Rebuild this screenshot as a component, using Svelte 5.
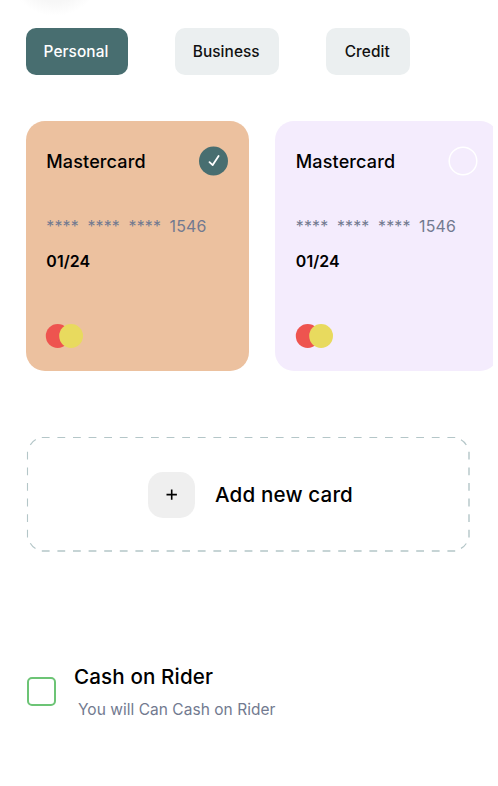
<script>
  const tabs = [
    { label: 'Personal', width: 102, active: true },
    { label: 'Business', width: 104.5, active: false },
    { label: 'Credit', width: 83.5, active: false }
  ];
  const cards = [
    { name: 'Mastercard', last: '1546', expiry: '01/24', selected: true },
    { name: 'Mastercard', last: '1546', expiry: '01/24', selected: false }
  ];
</script>

<main>
  <div class="shade"></div>
  <nav>
    {#each tabs as tab}
      <button class="tab" class:active={tab.active} style:width="{tab.width}px">{tab.label}</button>
    {/each}
  </nav>

  <section class="cards">
    {#each cards as card}
      <article class="card" class:selected={card.selected}>
        <header>
          <h2>{card.name}</h2>
          <svg width="30" height="30" viewBox="0 0 30 30" fill="none">
            {#if card.selected}
              <circle cx="14.5" cy="15" r="14.5" fill="#486e70" />
              <path d="M10.5 16.1 L13.7 19.1 L19.6 9.9" stroke="#fff" stroke-width="1.8" stroke-linecap="round" stroke-linejoin="round" />
            {:else}
              <circle cx="15" cy="15" r="13.8" stroke="#fff" stroke-width="1.5" />
            {/if}
          </svg>
        </header>
        <div class="number">
          <span class="mask">****</span><span class="mask">****</span><span class="mask">****</span><span>{card.last}</span>
        </div>
        <div class="expiry">{card.expiry}</div>
        <svg class="brand" width="38" height="24" viewBox="0 0 38 24">
          <circle cx="11.7" cy="12" r="11.9" fill="#ee544f" />
          <circle cx="25.1" cy="12" r="11.9" fill="#e8da5e" />
        </svg>
      </article>
    {/each}
  </section>

  <section class="add">
    <svg class="outline" width="444" height="116" viewBox="26 436 444 116" fill="none" stroke="#b4c6c8">
      <path d="M41.8 437.5H456" stroke-dasharray="7.8 7.8" stroke-width="1.1" />
      <path d="M41.8 551H456" stroke-dasharray="7.8 7.8" stroke-width="1.4" />
      <path d="M27.5 451.8V537.5" stroke-dasharray="7.8 7.8" stroke-width="1.1" />
      <path d="M469 451.8V537.5" stroke-dasharray="7.8 7.8" stroke-width="1.4" />
      <path d="M30.3 444.8Q32.5 441.5 35.8 439.6M461 439.8Q464.5 441.8 466.3 445M30.3 543.3Q32.2 546.6 35.5 548.6M461 548.4Q464.3 546.6 466.3 543.5" stroke-width="1.2" />
    </svg>
    <span class="plus">
      <svg width="12" height="12" viewBox="0 0 12 12" stroke="#000" stroke-width="1.6">
        <path d="M5.7 0.4v10.4M0.5 5.6h10.4" />
      </svg>
    </span>
    <span class="add-label">Add new card</span>
  </section>

  <section class="cash">
    <span class="box"></span>
    <div>
      <h3>Cash on Rider</h3>
      <p>You will Can Cash on Rider</p>
    </div>
  </section>
</main>

<style>
  :global(body) { margin: 0; background: #fff; }
  main {
    position: relative;
    box-sizing: border-box;
    width: 498px;
    height: 786px;
    padding-top: 28px;
    overflow: hidden;
    background: #fff;
    font-family: Inter, "Liberation Sans", sans-serif;
    color: #000;
  }
  h2, h3, p { margin: 0; font-weight: 500; }
  .shade {
    position: absolute;
    left: 7px;
    top: -80px;
    width: 96px;
    height: 96px;
    border-radius: 50%;
    background: radial-gradient(closest-side, #f7f7f7 70%, #fff);
  }
  nav { display: flex; gap: 47px; padding-left: 25.5px; height: 47px; }
  .tab {
    padding: 0 1px 0 0;
    border: 0;
    border-radius: 10px;
    background: #ebeff0;
    color: #111;
    font: 500 15.4px/47px Inter, "Liberation Sans", sans-serif;
    letter-spacing: 0.07px;
  }
  .tab.active { background: #486e70; color: #fff; }
  .cards {
    display: flex;
    gap: 26px;
    width: 467.5px;
    margin: 45.7px 0 0 25.5px;
    overflow: hidden;
  }
  .card {
    flex: none;
    box-sizing: border-box;
    width: 223.5px;
    height: 250.5px;
    padding: 25px 20.2px 0 20.8px;
    border-radius: 19px;
    background: #f4ecfd;
  }
  .card.selected { background: #ecc19f; }
  header { display: flex; justify-content: space-between; align-items: center; height: 30px; }
  h2 { padding-top: 2px; font-size: 18px; letter-spacing: 0.14px; line-height: 30px; }
  .number {
    display: flex;
    margin-top: 41px;
    height: 20px;
    font-size: 15.9px;
    letter-spacing: 0.2px;
    line-height: 20px;
    color: #727a90;
  }
  .mask { width: 41.1px; }
  .expiry { margin-top: 15px; font-size: 15.9px; letter-spacing: 0.1px; font-weight: 600; line-height: 20px; }
  .brand { display: block; margin-top: 52px; overflow: visible; }
  .add {
    position: relative;
    display: flex;
    align-items: center;
    width: 444px;
    height: 116px;
    margin: 64.8px 0 0 26px;
  }
  .outline { position: absolute; inset: 0; }
  .plus {
    display: flex;
    align-items: center;
    justify-content: center;
    width: 47px;
    height: 46px;
    margin: 2px 0 0 122px;
    border-radius: 15px;
    background: #efefef;
  }
  .add-label { margin: 2px 0 0 20px; font-size: 20.6px; letter-spacing: 0.15px; font-weight: 500; line-height: 30px; }
  .cash { display: flex; margin: 109px 0 0 26.6px; }
  .box {
    box-sizing: border-box;
    width: 29px;
    height: 29px;
    margin-top: 16px;
    border: 2px solid #6cc475;
    border-radius: 5px;
  }
  .cash div { margin: 1px 0 0 18.4px; }
  h3 { font-size: 20.6px; letter-spacing: 0.13px; line-height: 30px; }
  p { margin: 6px 0 0 4px; font-size: 15.5px; letter-spacing: 0.03px; font-weight: 400; line-height: 24px; color: #727a90; }
</style>
